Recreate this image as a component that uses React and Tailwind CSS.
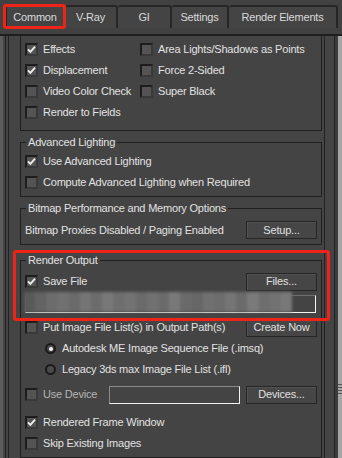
import clsx from "clsx";

const tabs = [
  { label: "Common", w: "w-[60px]" },
  { label: "V-Ray", w: "w-[53px]" },
  { label: "GI", w: "w-[54px]" },
  { label: "Settings", w: "w-[57px]" },
  { label: "Render Elements", w: "w-[109px]" },
];

// mosaic used to hide the output path in the screenshot
const blurBlocks = [
  "bg-[#5a5a5a]", "bg-[#636363]", "bg-[#6c6c6c]", "bg-[#717171]", "bg-[#6a6a6a]",
  "bg-[#757575]", "bg-[#6c6c6c]", "bg-[#787878]", "bg-[#6e6e6e]", "bg-[#737373]",
  "bg-[#6a6a6a]", "bg-[#717171]", "bg-[#6b6b6b]", "bg-[#797979]", "bg-[#6a6a6a]",
  "bg-[#676767]", "bg-[#707070]", "bg-[#6d6d6d]", "bg-[#757575]", "bg-[#6a6a6a]",
  "bg-[#7a7a7a]", "bg-[#6e6e6e]", "bg-[#727272]", "bg-[#797979]",
];

function Check({ checked }) {
  return (
    <span className="w-[13px] h-[13px] shrink-0 flex items-center justify-center border-2 border-t-[#1d1d1d] border-l-[#1d1d1d] border-r-[#393939] border-b-[#393939] bg-[#545454]">
      {checked && (
        <svg width="9" height="9" viewBox="0 0 9 9">
          <path d="M1 4.3 L3.4 6.8 L8 1.6" stroke="#ededed" strokeWidth="1.9" fill="none" />
        </svg>
      )}
    </span>
  );
}

function CheckRow({ label, checked, dim, className }) {
  return (
    <div className={clsx("flex items-center h-[21px] gap-[5px] whitespace-nowrap", className)}>
      <Check checked={checked} />
      <span className={dim ? "text-[#b4b4b4]" : "text-[#e2e2e2]"}>{label}</span>
    </div>
  );
}

function Radio({ on, label }) {
  return (
    <div className="flex items-center h-[21px] pl-[20px] gap-[6px] whitespace-nowrap">
      <span className="w-[11px] h-[11px] shrink-0 rounded-full border-2 border-[#1a1a1a] bg-[#4a4a4a] flex items-center justify-center">
        {on && <span className="w-[4px] h-[4px] rounded-full bg-[#f2f2f2]" />}
      </span>
      <span className="text-[#e2e2e2]">{label}</span>
    </div>
  );
}

function Btn({ children, className }) {
  return (
    <div
      className={clsx(
        "h-[18px] w-[71px] shrink-0 flex items-center justify-center border border-[#262626] bg-[#464646] shadow-[inset_1px_1px_0_#525252] text-[#e0e0e0]",
        className
      )}
    >
      {children}
    </div>
  );
}

function Group({ title, className, children }) {
  return (
    <fieldset className={clsx("border border-[#1f1f1f] pl-[4px] pr-[4px] min-w-0", className)}>
      <legend className="ml-[1px] px-[2px] leading-[14px] text-[#e2e2e2]">{title}</legend>
      {children}
    </fieldset>
  );
}

export default function App() {
  return (
    <div className="relative w-[342px] h-[458px] overflow-hidden bg-[#444444] font-['Liberation_Sans',Arial,sans-serif] text-[11px] tracking-[-0.2px] select-none">
      {/* tab strip */}
      <div className="h-[36px] pt-[5px] pl-[5px] border-b-2 border-[#1e1e1e] bg-[#414141]">
        <div className="flex">
          {tabs.map((t, i) => (
            <div
              key={t.label}
              className={clsx(
                "h-[23px] flex items-center justify-center bg-[#444444] border-t-2 border-r-2 border-[#262626] rounded-t-[3px] text-[#dadada]",
                i === 0 && "border-l-2",
                t.w
              )}
            >
              {t.label}
            </div>
          ))}
        </div>
      </div>

      {/* rollout body */}
      <div className="flex h-[422px]">
        <div className="w-[3px] bg-[#5c5c5c]" />
        <div className="w-[2px]" />
        <div className="w-[1px] bg-[#222]" />
        <div className="w-[2px]" />
        <div className="w-[1px] bg-[#222]" />

        <div className="w-[315px] pl-[11px] pr-[2px] overflow-hidden">
          {/* scrolled group (top edge out of view) */}
          <div className="border-x border-b border-[#1f1f1f] pl-[4px] pt-[3px] pb-[7px]">
            <div className="grid grid-cols-[115px_1fr]">
              <CheckRow label="Effects" checked />
              <CheckRow label="Area Lights/Shadows as Points" />
              <CheckRow label="Displacement" checked />
              <CheckRow label="Force 2-Sided" />
              <CheckRow label="Video Color Check" />
              <CheckRow label="Super Black" />
              <CheckRow label="Render to Fields" />
            </div>
          </div>

          <Group title="Advanced Lighting" className="mt-[4px] pt-[2px] pb-[3px]">
            <CheckRow label="Use Advanced Lighting" checked />
            <CheckRow label="Compute Advanced Lighting when Required" />
          </Group>

          <Group title="Bitmap Performance and Memory Options" className="mt-[4px] pt-[6px] pb-[5px]">
            <div className="flex items-center h-[18px]">
              <span className="text-[#e2e2e2] whitespace-nowrap">Bitmap Proxies Disabled / Paging Enabled</span>
              <Btn className="ml-auto">Setup...</Btn>
            </div>
          </Group>

          <Group title="Render Output" className="mt-[8px] pb-[3px]">
            <div className="mt-[4px] flex items-center">
              <CheckRow label="Save File" checked />
              <Btn className="ml-auto">Files...</Btn>
            </div>

            <div className="mt-[3px] h-[18px] mr-[1px] relative border border-t-[#6e6e6e] border-l-[#6e6e6e] border-b-[#f4f4f4] border-r-[#f4f4f4] bg-[#444]">
              <div className="absolute left-[-2px] top-[-4px] h-[20px] w-[268px] flex blur-[1.5px]">
                {blurBlocks.map((c, i) => (
                  <div key={i} className={clsx("flex-1", c)} />
                ))}
              </div>
            </div>

            <div className="mt-[4px] flex items-center">
              <CheckRow label="Put Image File List(s) in Output Path(s)" />
              <Btn className="ml-auto h-[17px]">Create Now</Btn>
            </div>
            <Radio on label="Autodesk ME Image Sequence File (.imsq)" />
            <Radio label="Legacy 3ds max Image File List (.ifl)" />

            <div className="mt-[4px] flex items-center h-[21px]">
              <CheckRow label="Use Device" dim className="w-[84px]" />
              <div className="w-[131px] h-[18px] border border-t-[#8a8a8a] border-l-[#8a8a8a] border-b-[#f2f2f2] border-r-[#f2f2f2]" />
              <Btn className="ml-auto w-[70px]">Devices...</Btn>
            </div>

            <CheckRow label="Rendered Frame Window" checked className="mt-[7px] h-[20px]" />
            <CheckRow label="Skip Existing Images" className="h-[20px]" />
          </Group>
        </div>

        {/* scrollbar */}
        <div className="w-[1px] bg-[#222]" />
        <div className="w-[9px]" />
        <div className="w-[1px] bg-[#222]" />
        <div className="w-[3px] bg-[#3c3c3c]" />
        <div className="w-[4px] bg-[#a6a6a6] pt-[348px] flex flex-col gap-[2px]">
          <div className="h-[1px] bg-[#555]" />
          <div className="h-[1px] bg-[#555]" />
          <div className="h-[1px] bg-[#555]" />
          <div className="h-[1px] bg-[#555]" />
        </div>
      </div>

      {/* red highlight annotations */}
      <div className="absolute left-[3px] top-[4px] w-[63px] h-[25px] border-[3px] border-[#ee2418] rounded-[3px]" />
      <div className="absolute left-[13px] top-[250px] w-[317px] h-[71px] border-[3px] border-[#ee2418] rounded-[3px]" />
    </div>
  );
}
